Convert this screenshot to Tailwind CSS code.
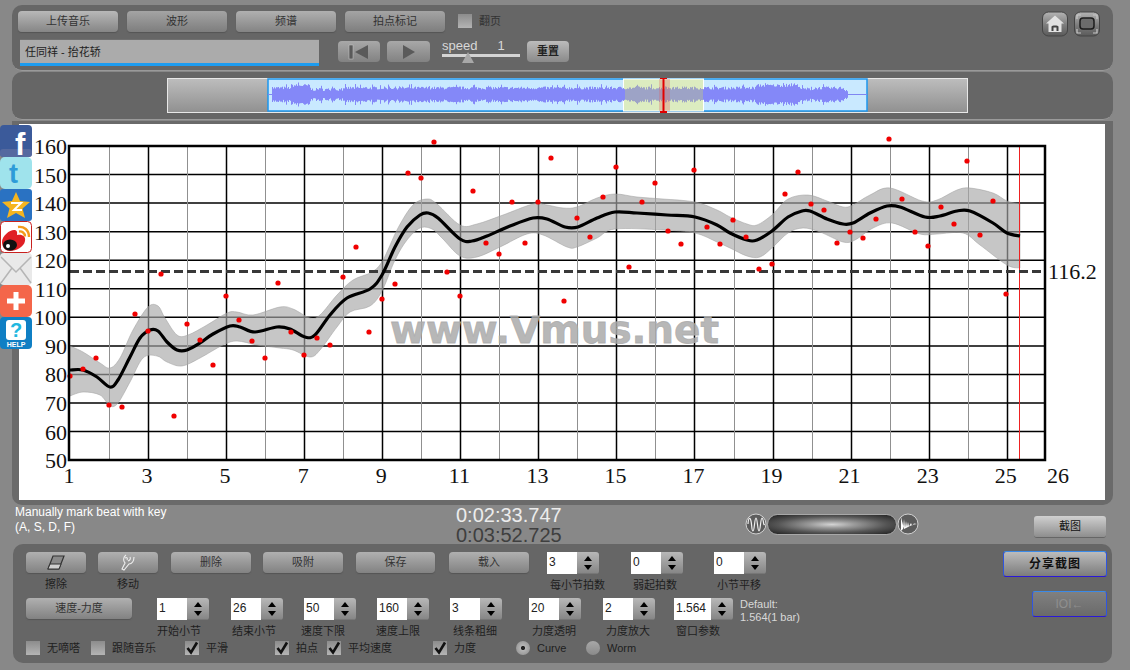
<!DOCTYPE html>
<html lang="zh">
<head>
    <meta charset="UTF-8">
    <title>Vmus.net</title>
    <script src="https://cdn.jsdelivr.net/npm/@tailwindcss/browser@4"></script>
</head>
<body class="relative w-[1130px] h-[670px] overflow-hidden bg-[#888888] pt-[5px] font-['Liberation_Sans','Noto_Sans_CJK_SC',sans-serif] text-[11px] text-[#2a2a2a]">

    <!-- top controls -->
    <div class="ml-[12px] w-[1101px] h-[66px] rounded-[10px] bg-[#666666] border-b border-[#9a9a9a] px-[6px] pt-[5px]">
        <div class="flex items-center h-[22px]">
            <button class="w-[100px] h-[21px] rounded-[4px] bg-linear-to-b from-[#b8b8b8] to-[#868686] shadow-[0_1px_1px_#555] text-[#333]">上传音乐</button>
            <button class="ml-[9px] w-[100px] h-[21px] rounded-[4px] bg-linear-to-b from-[#a4a4a4] to-[#7e7e7e] shadow-[0_1px_1px_#555] text-[#333]">波形</button>
            <button class="ml-[9px] w-[100px] h-[21px] rounded-[4px] bg-linear-to-b from-[#b0b0b0] to-[#848484] shadow-[0_1px_1px_#555] text-[#333]">频谱</button>
            <button class="ml-[9px] w-[100px] h-[21px] rounded-[4px] bg-linear-to-b from-[#a4a4a4] to-[#7e7e7e] shadow-[0_1px_1px_#555] text-[#333]">拍点标记</button>
            <span class="ml-[13px] w-[14px] h-[14px] bg-linear-to-b from-[#8c8c8c] to-[#b4b4b4]"></span>
            <span class="ml-[7px] text-[#333]">翻页</span>
            <svg class="ml-auto mr-[6px] mt-[6px]" width="60" height="26" viewBox="0 0 60 26">
                <defs>
                    <linearGradient id="knob" x1="0" y1="0" x2="0" y2="1"><stop offset="0" stop-color="#b4b4b4"/><stop offset="0.550" stop-color="#7c7c7c"/><stop offset="1" stop-color="#5a5a5a"/></linearGradient>
                </defs>
                <rect x="1.500" y="1" width="25" height="24" rx="6" fill="url(#knob)" stroke="#444"/>
                <path d="M14 4.500L23 12.500H20.500V21H7.500V12.500H5Z" fill="#e2e2e2"/>
                <path d="M10.500 20V15.500C10.500 14 17.500 14 17.500 15.500V20H15.500V16.500H12.500V20Z" fill="#444"/>
                <rect x="33.500" y="1" width="25" height="24" rx="6" fill="url(#knob)" stroke="#444"/>
                <rect x="39" y="7" width="14" height="11" rx="3" fill="#6c6c6c" stroke="#1c1c1c" stroke-width="1.500"/>
                <path d="M36 8V4H40M56 8V4H52M36 18V22H40M56 18V22H52" fill="none" stroke="#c8c8c8" stroke-width="1.200"/>
            </svg>
        </div>
        <div class="flex mt-[7px]">
            <div class="ml-[2px] w-[299px] h-[27px] bg-[#ababab] border-t border-[#6f6f6f] border-b-[3px] border-b-[#1c9cf0] pl-[5px] pt-[4px] text-[#222]">任同祥 - 抬花轿</div>
            <button class="ml-[19px] mt-[2px] w-[42px] h-[21px] rounded-[4px] bg-linear-to-b from-[#a8a8a8] to-[#828282] flex items-center justify-center" aria-label="previous">
                <svg width="22" height="16" viewBox="0 0 22 16"><rect x="1" y="1" width="4" height="14" fill="#5a5a5a" stroke="#ccc" stroke-width="0.500"/><path d="M20 1L7 8L20 15Z" fill="#5a5a5a"/></svg>
            </button>
            <button class="ml-[7px] mt-[2px] w-[43px] h-[21px] rounded-[4px] bg-linear-to-b from-[#a8a8a8] to-[#828282] flex items-center justify-center" aria-label="play">
                <svg width="14" height="16" viewBox="0 0 14 16"><path d="M1 1L13 8L1 15Z" fill="#5a5a5a"/></svg>
            </button>
            <div class="ml-[12px] w-[78px] h-[26px] flex flex-col">
                <div class="flex text-[13px] leading-[13px] text-[#d8d8d8]"><span>speed</span><span class="ml-[20px]">1</span></div>
                <div class="relative mt-[2px] h-[3px] bg-[#d4d4d4]">
                    <span class="absolute left-[20px] top-[-2px] w-0 h-0 border-x-[6px] border-x-transparent border-b-[11px] border-b-[#a8a8a8]"></span>
                </div>
            </div>
            <button class="ml-[7px] mt-[2px] w-[42px] h-[21px] rounded-[4px] bg-linear-to-b from-[#bcbcbc] to-[#8a8a8a] font-bold text-[#222]">重置</button>
        </div>
    </div>

    <!-- overview waveform -->
    <div class="ml-[12px] mt-[1px] w-[1101px] h-[48px] rounded-[10px] bg-[#666666] border-b border-[#9a9a9a] pt-[6px] pl-[155px]">
        <svg id="overview" width="801" height="35" viewBox="167 78 801 35"></svg>
    </div>

    <!-- chart panel -->
    <div class="ml-[12px] mt-[1px] w-[1101px] h-[384px] rounded-b-[10px] bg-[#6a6a6a] pl-[7px] pt-[3px]">
        <div class="w-[1086px] h-[376px] bg-white">
            <svg id="chart" width="1086" height="376" viewBox="19 124 1086 376" font-family="'Liberation Serif',serif" font-size="22" fill="#111"></svg>
        </div>
    </div>

    <!-- time readout -->
    <div class="flex h-[39px]">
        <div class="ml-[15px] w-[441px] text-[12px] leading-[15px] text-white">Manually mark beat with key<br>(A, S, D, F)</div>
        <div class="w-[289px] text-[20px] leading-[20px]">
            <div class="text-[#ececec]">0:02:33.747</div>
            <div class="text-[#3f3f3f]">0:03:52.725</div>
        </div>
        <div class="mt-[8px] flex items-center h-[22px]">
            <svg width="22" height="22" viewBox="0 0 22 22"><circle cx="11" cy="11" r="10" fill="#5c5c5c" stroke="#d0d0d0"/><path d="M3 11C3.500 4 5 4 6 8S6.500 18 8 18S9.500 5 11 5S12.500 18 14 18S15.500 5 17 5S18.500 14 19.500 11" fill="none" stroke="#f0f0f0" stroke-width="1.200"/></svg>
            <div class="w-[130px] h-[21px] rounded-full border border-[#a8a8a8] bg-[radial-gradient(ellipse_at_center,#d4d4d4_0%,#9a9a9a_25%,#555555_60%,#1e1e1e_100%)]"></div>
            <svg width="22" height="22" viewBox="0 0 22 22"><circle cx="11" cy="11" r="10" fill="#5c5c5c" stroke="#d0d0d0"/><path d="M4 4V18L6 16L7 6L8 15L9 8L10 14L11 9L12 13.500L14 10L15 12.500L17 10.500L20 11L17 11.500L15 12L13 13L11 14L9 15L7 16Z" fill="#fff"/></svg>
        </div>
        <button class="ml-[115px] mt-[11px] w-[72px] h-[22px] rounded-[3px] bg-linear-to-b from-[#d0d0d0] to-[#8e8e8e] border-b border-[#666] text-[#111]">截图</button>
    </div>

    <!-- bottom controls -->
    <div class="ml-[13px] w-[1099px] h-[119px] rounded-[10px] bg-[#666666] flex text-[#1e1e1e]">
        <div class="pl-[13px] pt-[8px] w-[800px]">
            <div id="row-one" class="flex h-[46px]"></div>
            <div id="row-two" class="flex h-[43px]"></div>
            <div class="flex items-center h-[14px] whitespace-nowrap">
                <span class="w-[14px] h-[14px] bg-linear-to-b from-[#8c8c8c] to-[#b4b4b4]"></span><span class="ml-[7px] w-[33px]">无嘀嗒</span>
                <span class="ml-[11px] w-[14px] h-[14px] bg-linear-to-b from-[#8c8c8c] to-[#b4b4b4]"></span><span class="ml-[7px] w-[44px]">跟随音乐</span>
                <span class="ml-[29px] w-[14px] h-[14px] bg-linear-to-b from-[#8c8c8c] to-[#b4b4b4] flex items-center justify-center"><svg width="14" height="14" viewBox="0 0 14 14"><path d="M2.500 7L6 11.500L12 1.500" fill="none" stroke="#111" stroke-width="2.600"/></svg></span><span class="ml-[7px] w-[22px]">平滑</span>
                <span class="ml-[47px] w-[14px] h-[14px] bg-linear-to-b from-[#8c8c8c] to-[#b4b4b4] flex items-center justify-center"><svg width="14" height="14" viewBox="0 0 14 14"><path d="M2.500 7L6 11.500L12 1.500" fill="none" stroke="#111" stroke-width="2.600"/></svg></span><span class="ml-[7px] w-[22px]">拍点</span>
                <span class="ml-[9px] w-[14px] h-[14px] bg-linear-to-b from-[#8c8c8c] to-[#b4b4b4] flex items-center justify-center"><svg width="14" height="14" viewBox="0 0 14 14"><path d="M2.500 7L6 11.500L12 1.500" fill="none" stroke="#111" stroke-width="2.600"/></svg></span><span class="ml-[7px] w-[44px]">平均速度</span>
                <span class="ml-[41px] w-[14px] h-[14px] bg-linear-to-b from-[#8c8c8c] to-[#b4b4b4] flex items-center justify-center"><svg width="14" height="14" viewBox="0 0 14 14"><path d="M2.500 7L6 11.500L12 1.500" fill="none" stroke="#111" stroke-width="2.600"/></svg></span><span class="ml-[7px] w-[22px]">力度</span>
                <span class="ml-[40px] w-[14px] h-[14px] rounded-full bg-[radial-gradient(circle,#222_0%,#222_18%,#b5b5b5_24%,#8a8a8a_100%)]"></span><span class="ml-[7px] w-[32px]">Curve</span>
                <span class="ml-[17px] w-[14px] h-[14px] rounded-full bg-linear-to-b from-[#a8a8a8] to-[#8a8a8a]"></span><span class="ml-[7px]">Worm</span>
            </div>
        </div>
        <div class="ml-auto pr-[5px] pt-[7px] flex flex-col items-end">
            <button class="w-[104px] h-[26px] rounded-[3px] border border-t-[#3a8ae8] border-x-[#2f55e0] border-b-[#2a18d8] bg-linear-to-b from-[#bcbcbc] to-[#7c7c7c] bg-clip-padding font-bold text-[12px] tracking-[1px] text-[#111]">分享截图</button>
            <button class="mt-[14px] w-[75px] h-[26px] rounded-[3px] border border-t-[#3a8ae8] border-x-[#2f55e0] border-b-[#2a18d8] bg-linear-to-b from-[#808080] to-[#6a6a6a] text-[12px] text-[#8f8f8f]">IOI←</button>
        </div>
    </div>

    <!-- share bar hanging over the chart -->
    <div class="absolute left-0 top-[125px] w-[32px] flex flex-col">
        <svg width="32" height="32" viewBox="0 0 32 32"><rect width="32" height="32" rx="4" fill="#3b5a9a"/><rect y="24" width="32" height="8" rx="3" fill="#55699f"/><text x="15" y="30" font-family="'Liberation Sans',sans-serif" font-weight="bold" font-size="31" fill="#fff">f</text></svg>
        <svg width="32" height="32" viewBox="0 0 32 32"><rect width="32" height="32" rx="5" fill="#9fe3ec"/><text x="9" y="26" font-family="'Liberation Sans',sans-serif" font-weight="bold" font-size="27" fill="#2d9bd8">t</text></svg>
        <svg width="32" height="32" viewBox="0 0 32 32"><rect width="32" height="32" rx="3" fill="#2a72c2"/><path d="M16 3L20 12L30 13L22.500 19.500L25 29L16 24L7 29L9.500 19.500L2 13L12 12Z" fill="#f5b520"/><path d="M11 14H21L14 21H22" fill="none" stroke="#fff" stroke-width="2"/></svg>
        <svg width="32" height="32" viewBox="0 0 32 32"><rect x="0.500" y="0.500" width="31" height="31" rx="4" fill="#fff" stroke="#c8201e"/><path d="M2 21C2 14 11 8 15 9C18 10 17 13 17 14C22 13 26 15 25 20C24 26 16 30 10 30C5 30 2 26 2 21Z" fill="#e02025"/><ellipse cx="10" cy="24" rx="7" ry="5.500" fill="#111"/><circle cx="8" cy="25" r="2" fill="#fff"/><path d="M18 6C24 5 29 9 29 16M19 10.500C22 10 25 12 25 15.500" fill="none" stroke="#f39a1c" stroke-width="2.400"/></svg>
        <svg width="32" height="32" viewBox="0 0 32 32"><rect width="32" height="32" rx="4" fill="#e9e9e9"/><path d="M1 4L16 19L31 4M1 30L12 15M31 30L20 15" fill="none" stroke="#b5b5b5" stroke-width="1.500"/></svg>
        <svg width="32" height="32" viewBox="0 0 32 32"><rect width="32" height="32" rx="5" fill="#f4664a"/><path d="M13.500 7H18.500V13.500H25V18.500H18.500V25H13.500V18.500H7V13.500H13.500Z" fill="#fff"/></svg>
        <svg width="32" height="32" viewBox="0 0 32 32"><rect width="32" height="32" rx="4" fill="#0f7fc4"/><rect x="6" y="3" width="20" height="20" rx="3" fill="#fff"/><text x="16" y="20" text-anchor="middle" font-family="'Liberation Sans',sans-serif" font-weight="bold" font-size="20" fill="#22b8e0">?</text><text x="16" y="30" text-anchor="middle" font-family="'Liberation Sans',sans-serif" font-weight="bold" font-size="7" fill="#fff">HELP</text></svg>
    </div>

    <script>
        // bottom panel rows: classes are listed in full so they get built
        const btn = 'h-[21px] rounded-[4px] bg-linear-to-b from-[#b0b0b0] to-[#828282] shadow-[0_1px_1px_#555] text-[#333]';
        const spinner = (value, label, cls, labelCls = 'ml-[3px]', inputCls = 'w-[30px]') => `
            <div class="${cls} flex flex-col items-start w-[52px] shrink-0">
                <div class="flex h-[22px]">
                    <div class="${inputCls} bg-white pl-[2px] text-[12px] leading-[21px] text-[#222]">${value}</div>
                    <div class="relative w-[22px] rounded-r-[3px] bg-linear-to-b from-[#b8b8b8] to-[#848484] flex flex-col items-center justify-center gap-[4px] shrink-0 shadow-[inset_0_-11px_0_-10px_#777]">
                        <span class="w-0 h-0 border-x-[4px] border-x-transparent border-b-[5px] border-b-black"></span>
                        <span class="w-0 h-0 border-x-[4px] border-x-transparent border-t-[5px] border-t-black"></span>
                    </div>
                </div>
                <div class="${labelCls} mt-[4px] whitespace-nowrap leading-[14px]">${label}</div>
            </div>`;

        document.getElementById('row-one').innerHTML = `
            <div class="w-[60px] flex flex-col items-center">
                <button class="w-[60px] flex items-center justify-center ${btn}" aria-label="erase"><svg width="18" height="15" viewBox="0 0 18 15"><path d="M6 1H17L12 14H1Z" fill="#8a8a8a" stroke="#333" stroke-width="1.200"/><path d="M3 9H14L12 14H1Z" fill="#cfcfcf" stroke="#333" stroke-width="1"/></svg></button>
                <span class="mt-[4px] leading-[14px]">擦除</span>
            </div>
            <div class="ml-[12px] w-[60px] flex flex-col items-center">
                <button class="w-[60px] flex items-center justify-center ${btn}" aria-label="move"><svg width="16" height="17" viewBox="0 0 16 17"><path d="M6 1C3 3 3 7 5 9L2 15L4 16L9 10C12 10 14 7 14 3M5 4C7 3 8 4 7 6M8 7C10 6 11 5 10 3" fill="none" stroke="#eee" stroke-width="1.100"/></svg></button>
                <span class="mt-[4px] leading-[14px]">移动</span>
            </div>
            <button class="ml-[13px] w-[80px] ${btn}">删除</button>
            <button class="ml-[12px] w-[80px] ${btn}">吸附</button>
            <button class="ml-[13px] w-[79px] ${btn}">保存</button>
            <button class="ml-[14px] w-[80px] ${btn}">载入</button>
            ${spinner(3, '每小节拍数', 'ml-[18px]')}
            ${spinner(0, '弱起拍数', 'ml-[32px]', 'ml-[2px]')}
            ${spinner(0, '小节平移', 'ml-[31px]')}`;

        document.getElementById('row-two').innerHTML = `
            <button class="w-[106px] ${btn}">速度-力度</button>
            ${spinner(1, '开始小节', 'ml-[25px]', 'ml-0')}
            ${spinner(26, '结束小节', 'ml-[22px]', 'ml-[1px]')}
            ${spinner(50, '速度下限', 'ml-[21px]', 'ml-[-3px]')}
            ${spinner(160, '速度上限', 'ml-[21px]', 'ml-[-1px]')}
            ${spinner(3, '线条粗细', 'ml-[21px]')}
            ${spinner(20, '力度透明', 'ml-[27px]')}
            ${spinner(2, '力度放大', 'ml-[22px]')}
            ${spinner('1.564', '窗口参数', 'ml-[19px]', 'ml-[2px]', 'w-[37px]')}
            <div class="ml-[14px] whitespace-nowrap leading-[13px] text-[#d8d8d8]">Default:<br>1.564(1 bar)</div>`;

        // overview waveform
        let seed = 7;
        const rnd = () => (seed = (seed * 16807) % 2147483647) / 2147483647;
        let wave = `
            <defs><linearGradient id="side" x1="0" y1="0" x2="0" y2="1"><stop offset="0" stop-color="#bdbdbd"/><stop offset="1" stop-color="#909090"/></linearGradient></defs>
            <rect x="167.500" y="78.500" width="800" height="34" fill="url(#side)" stroke="#e8e8e8"/>
            <rect x="268" y="79" width="599" height="32" fill="#c9e9ff" stroke="#1c96ee" stroke-width="1.500"/>
            <rect x="623.500" y="79" width="80" height="32" fill="#dcecc0" stroke="#fff"/>
            <path d="M268 94.500H272M848 94.500H867" stroke="#7f86f2"/>`;
        for (let x = 272; x < 848; x += 1) {
            let amp = 5 + rnd() * 3;
            if (x > 290 && x < 310) amp += 2.5;
            if (x > 310 && x < 345) amp -= 1.5;
            if (x > 755 && x < 800) amp += 2.5;
            if (x > 800 && x < 815) amp -= 1;
            if (x > 843) amp -= 2;
            if (rnd() > 0.9) amp += 2.5;
            const inSel = x > 624 && x < 703;
            wave += `<path d="M${x}.5 ${(94.5 - amp).toFixed(1)}V${(94.5 + amp).toFixed(1)}" stroke="${inSel ? '#9da3c6' : '#8488f8'}"/>`;
        }
        wave += `
            <rect x="659" y="79" width="11" height="32" fill="#e06060" opacity="0.300"/>
            <path d="M663.500 78V112" stroke="#e00000" stroke-width="2"/>
            <path d="M660 78H667M660 112H667" stroke="#e00000" stroke-width="2"/>`;
        document.getElementById('overview').innerHTML = wave;

        // chart, all numbers in page pixels read off the picture
        const xAt = n => 70 + 39.03 * (n - 1);
        const yAt = v => 146 + (160 - v) * 2.855;

        const curve = [[70,370],[83,370],[97,377],[110,387],[118,380],[130,357],[140,338],[150,330],[158,331],[167,342],[177,350],[187,350],[200,343],[213,334],[230,326],[240,327],[255,332],[277,327],[290,329],[305,337],[315,335],[330,315],[347,298],[370,289],[382,275],[395,247],[407,227],[420,215],[428,213],[438,218],[460,239],[472,241],[487,236],[510,226],[533,218],[547,219],[565,227],[578,227],[597,218],[615,212],[637,213],[667,215],[695,217],[717,225],[730,233],[747,240],[757,240],[772,231],[788,217],[802,211],[810,211],[827,219],[843,224],[853,223],[870,213],[887,206],[900,207],[925,217],[940,216],[957,211],[970,211],[993,223],[1007,233],[1020,236]];
        const upper = [[70,346],[83,352],[100,363],[110,368],[120,358],[133,330],[148,307],[158,306],[165,318],[177,335],[188,335],[207,325],[227,313],[237,312],[253,315],[280,307],[293,309],[310,318],[320,315],[337,295],[353,280],[372,272],[383,260],[398,228],[413,205],[427,199],[437,204],[460,225],[477,224],[503,215],[533,204],[547,205],[563,208],[577,207],[597,198],[615,194],[637,197],[663,199],[695,202],[717,210],[730,217],[747,224],[757,225],[772,215],[788,199],[808,195],[827,201],[843,207],[853,205],[870,195],[890,188],[922,201],[937,200],[957,190],[970,188],[993,193],[1007,201],[1020,204]];
        const lower = [[70,396],[83,392],[100,395],[110,406],[118,403],[130,382],[143,358],[157,356],[167,362],[182,366],[200,358],[223,345],[237,341],[257,345],[280,348],[293,350],[310,357],[320,350],[337,327],[350,312],[370,306],[382,291],[395,260],[407,240],[420,228],[432,229],[442,238],[460,256],[477,257],[500,247],[527,234],[543,235],[567,247],[577,247],[597,238],[615,229],[663,230],[695,233],[717,242],[730,248],[747,256],[760,257],[773,247],[788,233],[803,228],[820,232],[843,242],[855,240],[873,228],[892,223],[920,234],[937,234],[963,233],[980,245],[1007,265],[1020,268]];
        const dots = [[70,376],[83,369],[96,358],[109,405],[122,407],[135,314],[148,331],[161,274],[174,416],[187,324],[200,340],[213,365],[226,296],[239,320],[252,341],[265,358],[278,283],[291,332],[304,355],[317,338],[330,345],[343,277],[356,247],[369,332],[382,299],[395,284],[408,173],[421,178],[434,142],[447,272],[460,296],[473,191],[486,243],[499,254],[512,202],[525,243],[538,202],[551,158],[564,301],[577,218],[590,237],[603,197],[616,167],[629,267],[642,202],[655,183],[668,231],[681,244],[694,170],[707,227],[720,244],[733,220],[746,237],[759,269],[772,264],[785,194],[798,172],[811,204],[824,210],[837,243],[850,232],[863,238],[876,219],[889,139],[902,199],[915,232],[928,246],[941,207],[954,224],[967,161],[980,235],[993,201],[1006,294]];

        const smooth = pts => {
            let d = `${pts[0][0]} ${pts[0][1]}`;
            for (let i = 0; i < pts.length - 1; i++) {
                const p0 = pts[Math.max(i - 1, 0)], p1 = pts[i], p2 = pts[i + 1], p3 = pts[Math.min(i + 2, pts.length - 1)];
                const c1 = [p1[0] + (p2[0] - p0[0]) / 6, p1[1] + (p2[1] - p0[1]) / 6];
                const c2 = [p2[0] - (p3[0] - p1[0]) / 6, p2[1] - (p3[1] - p1[1]) / 6];
                d += ` C${c1[0].toFixed(1)} ${c1[1].toFixed(1)} ${c2[0].toFixed(1)} ${c2[1].toFixed(1)} ${p2[0]} ${p2[1]}`;
            }
            return d;
        };

        let svg = '';
        for (let v = 50; v <= 160; v += 10) {
            const y = yAt(v);
            svg += `<path d="M70 ${y.toFixed(1)}H1045" stroke="#000" stroke-width="1.500"/>`;
            svg += `<text x="67" y="${(y + 8).toFixed(1)}" text-anchor="end">${v}</text>`;
        }
        for (let n = 2; n <= 25; n++) {
            const x = Math.round(xAt(n)) + 0.5;
            svg += `<path d="M${x} 146V460" stroke="${n % 2 ? '#000' : '#909090'}" stroke-width="${n % 2 ? 1.5 : 1}"/>`;
        }
        [1, 3, 5, 7, 9, 11, 13, 15, 17, 19, 21, 23, 25].forEach(n => {
            svg += `<text x="${(xAt(n) - 1).toFixed(1)}" y="483" text-anchor="middle">${n}</text>`;
        });
        svg += `<text x="1058" y="483" text-anchor="middle">26</text>`;
        svg += `<path d="M${smooth(upper)} L${smooth([...lower].reverse())} Z" fill="#a8a8a8" fill-opacity="0.650" stroke="#9c9c9c" stroke-width="0.500"/>`;
        svg += `<text x="390" y="343" font-family="'DejaVu Sans',sans-serif" font-weight="bold" font-size="38" fill="#aaaaaa" fill-opacity="0.850" stroke="#aaaaaa" stroke-opacity="0.850" stroke-width="0.800" textLength="329" lengthAdjust="spacingAndGlyphs">www.Vmus.net</text>`;
        svg += `<path d="M1019.500 146V460" stroke="#e22" stroke-width="1"/>`;
        svg += `<path d="M70 271.500H1045" stroke="#383838" stroke-width="3" stroke-dasharray="9 4"/>`;
        svg += `<path d="M${smooth(curve)}" fill="none" stroke="#000" stroke-width="3.200" stroke-linejoin="round"/>`;
        dots.forEach(p => { svg += `<circle cx="${p[0]}" cy="${p[1]}" r="2.600" fill="#f00000"/>`; });
        svg += `<rect x="69" y="146" width="976" height="314" fill="none" stroke="#000" stroke-width="2.500"/>`;
        svg += `<text x="1048" y="279">116.2</text>`;
        document.getElementById('chart').innerHTML = svg;
    </script>
</body>
</html>
